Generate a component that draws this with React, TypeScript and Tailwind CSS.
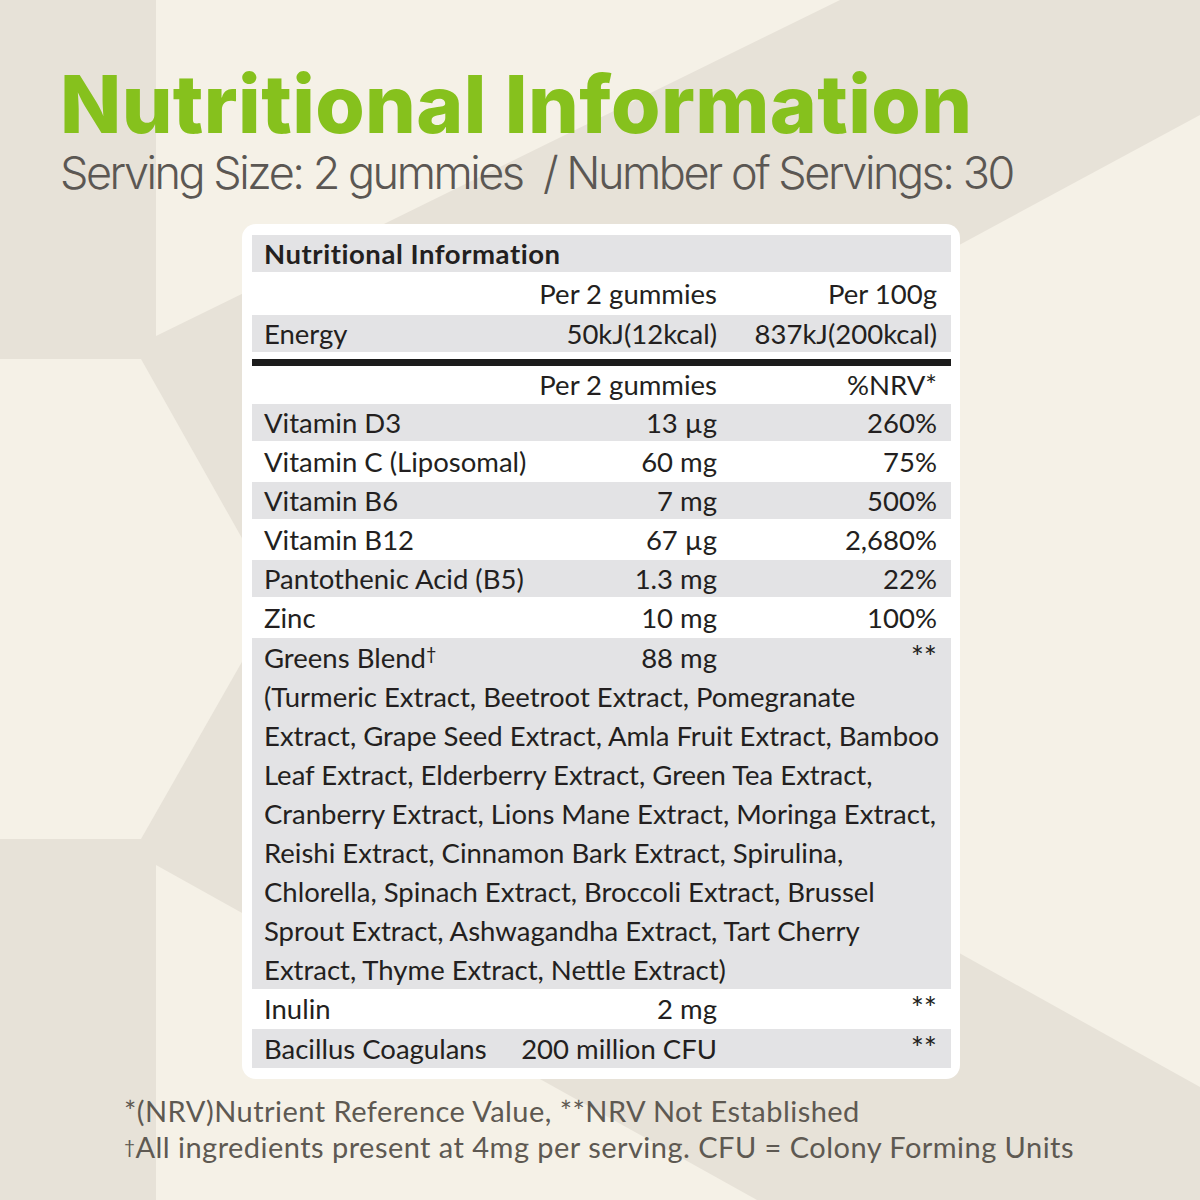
import React from 'react';

const vitamins: [string, string, string][] = [
  ['Vitamin D3', '13 µg', '260%'],
  ['Vitamin C (Liposomal)', '60 mg', '75%'],
  ['Vitamin B6', '7 mg', '500%'],
  ['Vitamin B12', '67 µg', '2,680%'],
  ['Pantothenic Acid (B5)', '1.3 mg', '22%'],
  ['Zinc', '10 mg', '100%'],
];

const greens = [
  '(Turmeric Extract, Beetroot Extract, Pomegranate',
  'Extract, Grape Seed Extract, Amla Fruit Extract, Bamboo',
  'Leaf Extract, Elderberry Extract, Green Tea Extract,',
  'Cranberry Extract, Lions Mane Extract, Moringa Extract,',
  'Reishi Extract, Cinnamon Bark Extract, Spirulina,',
  'Chlorella, Spinach Extract, Broccoli Extract, Brussel',
  'Sprout Extract, Ashwagandha Extract, Tart Cherry',
  'Extract, Thyme Extract, Nettle Extract)',
];

const Backdrop = () => (
  <svg className="absolute inset-0" width="1200" height="1200" viewBox="0 0 1200 1200">
    <rect width="1200" height="1200" fill="#e7e2d8" />
    <polygon points="156,0 840,0 156,336" fill="#f5f1e7" />
    <polygon points="0,359 141,359 243,540 243,660 141,839 0,839" fill="#f5f1e7" />
    <polygon points="1200,115 900,277 900,920 1200,1087" fill="#f5f1e7" />
    <polygon points="156,865 757,1200 156,1200" fill="#f5f1e7" />
  </svg>
);

const Stars = () => <span className="text-[31px] leading-none">**</span>;

type RowProps = { name: React.ReactNode; a?: React.ReactNode; b?: React.ReactNode; gray?: boolean; h: string };

const Row = ({ name, a, b, gray, h }: RowProps) => (
  <div className={`flex items-center pl-[12px] pr-[14px] ${h} ${gray ? 'bg-[#e3e3e5]' : ''}`}>
    <span className="flex-1 whitespace-nowrap">{name}</span>
    <span className="whitespace-nowrap text-right">{a}</span>
    <span className="w-[220px] whitespace-nowrap text-right">{b}</span>
  </div>
);

export default function App() {
  return (
    <div className="relative h-[1200px] w-[1200px] overflow-hidden bg-[#f5f1e7]">
      <Backdrop />
      <div className="relative flex flex-col">
        <header className="pl-[60px] pt-[64px]">
          <h1 className="font-['Inter',sans-serif] text-[80px] font-extrabold leading-none tracking-[0.005em] text-[#86c11d]">
            Nutritional Information
          </h1>
          <p className="mt-[6px] whitespace-pre font-['Inter',sans-serif] text-[45px] font-light leading-none tracking-[-0.055em] text-[#5b5753]">
            Serving Size: 2 gummies  / Number of Servings: 30
          </p>
        </header>

        <div className="ml-[242px] mt-[29px] w-[718px] rounded-[14px] bg-white pb-[11px] pl-[10px] pr-[9px] pt-[11px] font-['Lato',sans-serif] text-[27.5px] text-[#231f20]">
          <div className="flex h-[37px] items-center bg-[#e3e3e5] pl-[12px] font-bold tracking-[0.02em]">Nutritional Information</div>
          <Row name="" a="Per 2 gummies" b="Per 100g" h="h-[43px]" />
          <Row name="Energy" a="50kJ(12kcal)" b="837kJ(200kcal)" gray h="h-[37px]" />
          <div className="mt-[7px] h-[7px] bg-[#1c1c1c]" />
          <Row name="" a="Per 2 gummies" b="%NRV*" h="h-[38px]" />
          {vitamins.map(([n, a, b], i) => (
            <Row key={n} name={n} a={a} b={b} gray={i % 2 === 0} h={i % 2 === 0 ? 'h-[37px]' : 'h-[41px]'} />
          ))}
          <div className="bg-[#e3e3e5] pl-[12px] pr-[14px] leading-[39px]">
            <div className="flex">
              <span className="flex-1">
                Greens Blend<span className="align-top text-[18px] leading-[30px]">†</span>
              </span>
              <span className="text-right">88 mg</span>
              <span className="w-[220px] text-right">
                <Stars />
              </span>
            </div>
            {greens.map((l) => (
              <div key={l} className="whitespace-nowrap">{l}</div>
            ))}
          </div>
          <Row name="Inulin" a="2 mg" b={<Stars />} h="h-[40px]" />
          <Row name="Bacillus Coagulans" a="200 million CFU" b={<Stars />} gray h="h-[39px]" />
        </div>

        <footer className="mt-[14px] pl-[124px] font-['Lato',sans-serif] text-[29px] leading-[36px] tracking-[0.016em] text-[#5e5952]">
          <p>*(NRV)Nutrient Reference Value, **NRV Not Established</p>
          <p>
            <span className="align-top text-[19px]">†</span>All ingredients present at 4mg per serving. CFU = Colony Forming Units
          </p>
        </footer>
      </div>
    </div>
  );
}
